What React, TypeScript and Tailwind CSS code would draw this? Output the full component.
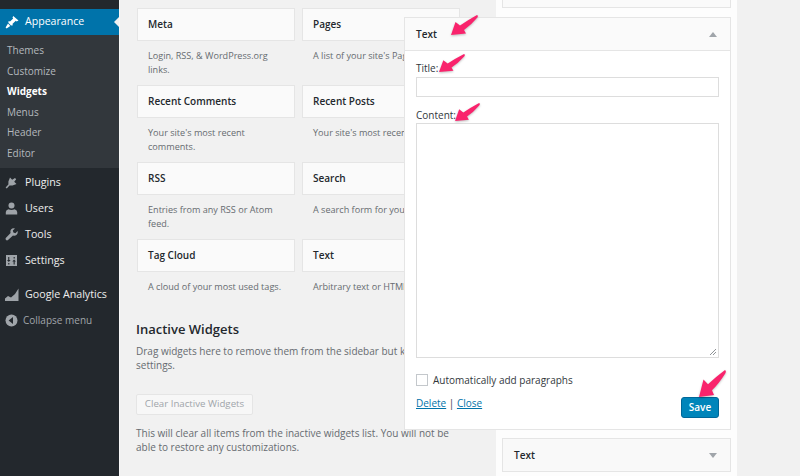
const FONT = "font-['Open_Sans',sans-serif]";

const widgets = [
  { left: 'Meta', leftDesc: ['Login, RSS, & WordPress.org', 'links.'], right: 'Pages', rightDesc: "A list of your site's Pages." },
  { left: 'Recent Comments', leftDesc: ["Your site's most recent", 'comments.'], right: 'Recent Posts', rightDesc: "Your site's most recent Posts." },
  { left: 'RSS', leftDesc: ['Entries from any RSS or Atom', 'feed.'], right: 'Search', rightDesc: 'A search form for your site.' },
  { left: 'Tag Cloud', leftDesc: ['A cloud of your most used tags.'], right: 'Text', rightDesc: 'Arbitrary text or HTML.' },
];

function Arrow({ className }: { className: string }) {
  return (
    <svg viewBox="0 0 27 20" preserveAspectRatio="none" className={`absolute overflow-visible drop-shadow-[0_1px_1px_rgba(0,0,0,0.25)] ${className}`}>
      <path d="M0 20 L4.5 7 L9 10.5 Q17 5 26 0 Q27.5 .8 26.4 2.4 Q20 10 13 15 L15 18.5 Z" fill="#f9236c" />
    </svg>
  );
}

function MenuItem({ icon, label, className = '' }: { icon: React.ReactNode; label: string; className?: string }) {
  return (
    <div className={`flex items-center h-[26px] text-[10.7px] text-[#eeeeee] ${className}`}>
      <span className="w-[25px] pl-[5px] flex items-center text-[#9ea3a8]">{icon}</span>
      {label}
    </div>
  );
}

function Sidebar() {
  return (
    <div className="w-[119px] shrink-0 bg-[#23282d] pt-[9px]">
      <div className="relative flex items-center h-[26px] bg-[#0073aa] text-white text-[10.6px]">
        <span className="w-[25px] pl-[5px] flex items-center">
          <svg width="14" height="14" viewBox="0 0 14 14" fill="#ffffff">
            <path d="M8.2 1 L13.5 5.6 L11.6 6.4 L10.8 5.7 L7.4 9 L8 10.2 L6 10.4 L3.4 7.8 L3.6 6 L5 6.6 L8.2 3.4 L7.5 2.8 Z M3 8.6 L5.3 10.9 L1.6 13.6 L.6 12.6 Z" />
          </svg>
        </span>
        Appearance
        <span className="absolute right-0 top-[8px] border-y-[5px] border-y-transparent border-r-[5px] border-r-[#f1f1f1]" />
      </div>
      <div className="bg-[#32373c] h-[133px] pt-[5px] text-[10px] text-[#b4b9be]">
        {['Themes', 'Customize', 'Widgets', 'Menus', 'Header', 'Editor'].map((item) => (
          <div key={item} className={`h-[20.5px] leading-[20.5px] pl-[7px] ${item === 'Widgets' ? 'font-bold text-white' : ''}`}>
            {item}
          </div>
        ))}
      </div>
      <div className="pt-[1px]">
        <MenuItem
          label="Plugins"
          icon={
            <svg width="13" height="13" viewBox="0 0 13 13" fill="#9ea3a8">
              <path d="M5 1.5 L7.2 3.8 L10 2 L11.2 3.2 L9.2 5.8 L11.5 8 L7.5 9.5 L4.5 9.5 L1.8 12.5 L.6 11.4 L3.4 8.5 L3.4 5.5 Z" />
            </svg>
          }
        />
        <MenuItem
          label="Users"
          icon={
            <svg width="13" height="13" viewBox="0 0 13 13" fill="#9ea3a8">
              <circle cx="6.5" cy="3.5" r="3" />
              <path d="M.8 12.5 V10 Q1 7.8 3.5 7.2 Q6.5 8.8 9.5 7.2 Q12 7.8 12.2 10 V12.5 Z" />
            </svg>
          }
        />
        <MenuItem
          label="Tools"
          icon={
            <svg width="13" height="13" viewBox="0 0 13 13" fill="#9ea3a8">
              <path d="M12.6 3 L10.4 5.2 L8.4 4.6 L7.8 2.6 L10 .4 Q7.4 -.2 6 1.6 Q5 3 5.6 5 L.8 10 Q.2 11 1 11.9 Q2 12.8 3 12 L8 7.4 Q10 8 11.4 7 Q13.2 5.6 12.6 3 Z" />
            </svg>
          }
        />
        <MenuItem
          label="Settings"
          icon={
            <svg width="13" height="13" viewBox="0 0 13 13">
              <path fill="#9ea3a8" d="M1 1 H12 V12 H1 Z" />
              <path fill="#23282d" d="M3.2 3 H4.3 V6 H5.6 L3.8 8 L2 6 H3.2 Z M3.2 9 H4.4 V10.4 H3.2 Z M8.6 10.4 V7.4 H7.3 L9.1 5.4 L10.9 7.4 H9.7 V10.4 Z M8.6 3 H9.8 V4.4 H8.6 Z" />
            </svg>
          }
        />
        <MenuItem
          className="mt-[8px]"
          label="Google Analytics"
          icon={
            <svg width="14" height="13" viewBox="0 0 14 13" fill="#9ea3a8">
              <path d="M0 13 V10.5 L3 8 L6 9.5 L10 6 L13.5 .5 V13 Z" />
            </svg>
          }
        />
        <div className="flex items-center h-[26px] text-[10px] text-[#a0a5aa]">
          <span className="w-[23px] pl-[5px] flex items-center">
            <svg width="13" height="13" viewBox="0 0 13 13">
              <circle cx="6.5" cy="6.5" r="6" fill="#a0a5aa" />
              <path d="M8 3 V10 L3.6 6.5 Z" fill="#23282d" />
            </svg>
          </span>
          Collapse menu
        </div>
      </div>
    </div>
  );
}

function WidgetCard({ title }: { title: string }) {
  return (
    <div className="h-[33px] bg-[#fafafa] border border-[#e5e5e5] pl-[10px] flex items-center text-[10px] font-semibold text-[#23282d]">
      {title}
    </div>
  );
}

function AvailableWidgets() {
  return (
    <div className="w-[376px] shrink-0 pl-[16px] pt-[8px] text-[#666b70]">
      {widgets.map((row) => (
        <div key={row.left} className="flex gap-[7px] ml-[1px] h-[76.9px]">
          <div className="w-[158px] shrink-0">
            <WidgetCard title={row.left} />
            <div className="pl-[11px] pt-[8px] text-[9.1px] leading-[14px] whitespace-nowrap">
              {row.leftDesc.map((line) => (
                <div key={line}>{line}</div>
              ))}
            </div>
          </div>
          <div className="w-[158px] shrink-0">
            <WidgetCard title={row.right} />
            <div className="pl-[11px] pt-[8px] text-[9.1px] leading-[14px] whitespace-nowrap">{row.rightDesc}</div>
          </div>
        </div>
      ))}
      <h2 className="mt-[3px] text-[13px] leading-[20px] font-semibold text-[#23282d]">Inactive Widgets</h2>
      <p className="mt-[5px] text-[10px] leading-[14.5px] whitespace-nowrap">
        Drag widgets here to remove them from the sidebar but keep their
        <br />
        settings.
      </p>
      <button className="mt-[21px] h-[21px] w-[117px] bg-[#f7f7f7] border border-[#e5e5e5] rounded-[2px] text-[9.7px] text-[#a0a5aa]">
        Clear Inactive Widgets
      </button>
      <p className="mt-[11px] text-[10px] leading-[14.5px] whitespace-nowrap">
        This will clear all items from the inactive widgets list. You will not be
        <br />
        able to restore any customizations.
      </p>
    </div>
  );
}

function SidebarColumn() {
  return (
    <div className="w-[241px] shrink-0 h-full bg-[#fdfdfd] px-[6px] flex flex-col">
      <div className="h-[8px] bg-[#fafafa] border border-t-0 border-[#e5e5e5]" />
      <div className="mt-[430px] bg-[#f9f9f9] h-[34px] border border-[#e5e5e5] flex items-center justify-between pl-[11px] pr-[13px] text-[10px] font-semibold text-[#23282d]">
        Text
        <span className="border-x-[4px] border-x-transparent border-t-[5px] border-t-[#a0a5aa]" />
      </div>
    </div>
  );
}

function TextPanel() {
  return (
    <div className="absolute left-[404px] top-[17px] w-[327px] h-[413px] bg-white border border-[#e5e5e5] text-[#32373c] text-[10px]">
      <div className="h-[33px] bg-[#fafafa] border-b border-[#e5e5e5] flex items-center justify-between pl-[11px] pr-[13px] font-semibold text-[#23282d]">
        Text
        <span className="border-x-[4px] border-x-transparent border-b-[5px] border-b-[#a0a5aa]" />
      </div>
      <div className="px-[11px]">
        <div className="mt-[10px] leading-[15px]">Title:</div>
        <input className="block mt-[1px] w-[303px] h-[20px] border border-[#dddddd] bg-white" />
        <div className="mt-[11px] leading-[15px]">Content:</div>
        <div className="relative w-[303px] h-[235px] border border-[#dddddd] bg-white">
          <svg width="8" height="8" viewBox="0 0 8 8" className="absolute right-[1px] bottom-[1px]" stroke="#72777c" strokeWidth="0.8">
            <path d="M7 1 L1 7 M7 4 L4 7" />
          </svg>
        </div>
        <label className="flex items-center mt-[16px] h-[12px] text-[10px]">
          <span className="w-[12px] h-[12px] border border-[#c4c8cc] bg-white mr-[5px]" />
          Automatically add paragraphs
        </label>
        <div className="flex justify-between mt-[11px]">
          <div className="text-[10px] leading-[13px]">
            <span className="text-[#0073aa] underline">Delete</span> | <span className="text-[#0073aa] underline">Close</span>
          </div>
          <button className="w-[38px] h-[21px] bg-[#0085ba] border border-[#006799] rounded-[3px] text-white text-[10px] font-semibold">
            Save
          </button>
        </div>
      </div>
    </div>
  );
}

export default function App() {
  return (
    <div className={`relative flex w-[800px] h-[476px] overflow-hidden bg-[#f1f1f1] ${FONT}`}>
      <Sidebar />
      <div className="w-[1px] shrink-0 bg-[#f8f8f8]" />
      <AvailableWidgets />
      <SidebarColumn />
      <TextPanel />
      <Arrow className="left-[451px] top-[15px] w-[27px] h-[20px]" />
      <Arrow className="left-[439px] top-[54px] w-[26px] h-[18px]" />
      <Arrow className="left-[455px] top-[103px] w-[25px] h-[18px]" />
      <Arrow className="left-[699px] top-[370px] w-[27px] h-[27px]" />
    </div>
  );
}
